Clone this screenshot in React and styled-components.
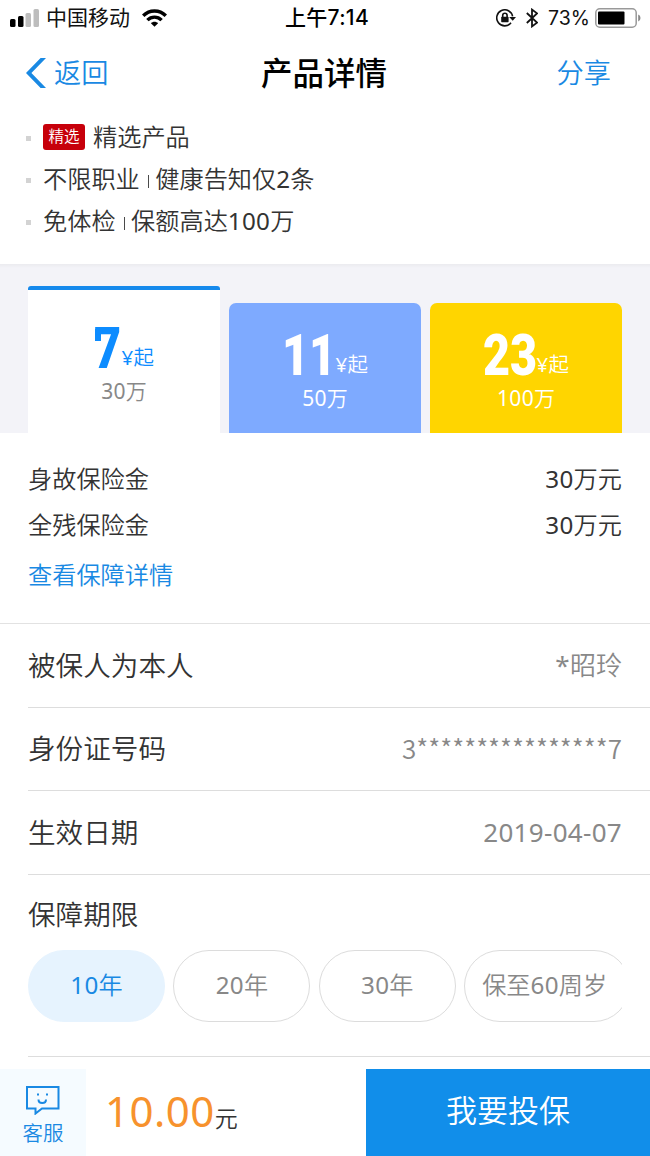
import { useState } from 'react';
import styled, { createGlobalStyle } from 'styled-components';

const CJK = '"Noto Sans CJK SC", sans-serif';
const BLUE = '#1989e3';

const GlobalStyle = createGlobalStyle`
    * {
        box-sizing: border-box;
    }

    body {
        margin: 0;
        background: #fff;
        color: #333;
        font-family: "Noto Sans", ${CJK};
        font-weight: 350;
    }

    button {
        border: 0;
        margin: 0;
        padding: 0;
        background: none;
        font: inherit;
        color: inherit;
    }
`;

const Page = styled.div`
    width: 650px;
    height: 1156px;
    display: flex;
    flex-direction: column;
    overflow: hidden;
    white-space: nowrap;
`;

const StatusBar = styled.div`
    height: 36px;
    flex: none;
    display: grid;
    grid-template-columns: 1fr auto 1fr;
    align-items: center;
    padding: 0 9px 0 10px;
    font: 400 21px/36px Inter, ${CJK};
    color: #111;
`;

const Carrier = styled.div`
    display: flex;
    align-items: center;

    svg + span {
        margin: 0 12px 0 7px;
    }
`;

const Time = styled.div`
    padding-left: 3px;
    font: 500 21px/36px Inter, ${CJK};
    letter-spacing: .3px;
    color: #000;
`;

const Indicators = styled.div`
    display: flex;
    align-items: center;
    justify-content: flex-end;
    font-size: 19.5px;

    svg:first-child {
        margin-right: 10px;
    }
`;

const Percent = styled.span`
    margin: 0 5px 0 10px;
`;

const NavBar = styled.div`
    height: 74px;
    flex: none;
    display: grid;
    grid-template-columns: 1fr auto 1fr;
    align-items: center;
    padding: 0 39px 0 26px;
`;

const NavButton = styled.button`
    display: flex;
    align-items: center;
    justify-self: ${({$right}) => $right ? 'end' : 'start'};
    gap: 8px;
    font-size: 27.2px;
    line-height: 74px;
    color: ${BLUE};
`;

const Title = styled.h1`
    margin: 0;
    padding: 0 0 3px 11px;
    font: 500 31.5px/71px ${CJK};
    color: #000;
`;

const Num = styled.span`
    font-weight: 400;
    letter-spacing: .3px;
`;

const Features = styled.ul`
    height: 154px;
    flex: none;
    margin: 0;
    padding: 6px 0 0 26px;
    list-style: none;
`;

const Feature = styled.li`
    height: 42px;
    display: flex;
    align-items: center;
    padding-bottom: 1px;
    font-size: 24.2px;
    line-height: 41px;

    &::before {
        content: '';
        width: 5px;
        height: 5px;
        margin: 3px 12px 0 0;
        background: #d3d3d3;
    }
`;

const Tag = styled.span`
    width: 42px;
    height: 26px;
    margin: 1px 8px 0 0;
    border-radius: 3px;
    background: #c7000b;
    color: #fff;
    font-size: 15.5px;
    line-height: 25px;
    text-align: center;
`;

const Divider = styled.i`
    width: 1.5px;
    height: 13px;
    margin: 5px 6px 0 8px;
    background: #4a4a4a;
`;

const Plans = styled.div`
    height: 169px;
    flex: none;
    display: flex;
    align-items: flex-end;
    gap: 9px;
    padding: 0 28px;
    background: linear-gradient(#ebebef, #f3f3f8 4px);
`;

const Plan = styled.button`
    width: 192px;
    height: ${({$active}) => $active ? 147 : 130}px;
    display: flex;
    flex-direction: column;
    align-items: center;
    padding-top: ${({$active}) => $active ? 35 : 29}px;
    border-top: ${({$active}) => $active ? '4px solid #1589ec' : '0'};
    border-radius: ${({$active}) => $active ? 3 : 7}px ${({$active}) => $active ? 3 : 7}px 0 0;
    background: ${({$active, $color}) => $active ? '#fff' : $color};
    color: ${({$active}) => $active ? '#0d8cff' : '#fff'};
`;

const PlanPrice = styled.span`
    display: flex;
    align-items: flex-end;
    height: 48px;
    font-size: 20.5px;
    line-height: 30px;
`;

const PlanNumber = styled.span`
    position: relative;
    width: ${({$digits}) => $digits * 26}px;
    margin-right: 1.5px;
    font: 700 57px/48px Roboto, sans-serif;

    b {
        display: inline-block;
        transform: scaleX(.82);
        transform-origin: 0 50%;
    }

    &::before {
        content: '';
        display: ${({$drop}) => $drop ? 'block' : 'none'};
        position: absolute;
        left: 1px;
        top: 4px;
        width: 6px;
        height: 12px;
        background: currentColor;
    }
`;

const PlanUnit = styled.span`
    margin-bottom: 1px;
`;

const PlanAmount = styled.span`
    margin-top: 3px;
    font-size: 21px;
    line-height: 30px;
    color: ${({$active}) => $active ? '#888' : 'inherit'};
`;

const Coverage = styled.section`
    height: 191px;
    flex: none;
    padding: 23px 28px 0;
    border-bottom: 1px solid #e2e2e2;
    font-size: 24.2px;
    line-height: 46px;
`;

const CoverageRow = styled.div`
    display: flex;
    justify-content: space-between;
`;

const DetailLink = styled.a`
    display: block;
    margin-top: 4px;
    color: ${BLUE};
`;

const Form = styled.section`
    flex: 1;
    margin-left: 28px;
`;

const Field = styled.div`
    height: ${({$height}) => $height}px;
    display: flex;
    align-items: center;
    justify-content: space-between;
    padding: 0 28px 2px 0;
    border-bottom: 1px solid #ddd;
    font-size: 27.6px;
    line-height: 40px;
`;

const Value = styled.span`
    font-size: 26px;
    color: #888;
`;

const MaskedValue = styled(Value)`
    font-family: ${CJK};
`;

const Period = styled.div`
    height: 182px;
    padding: 18px 28px 0 0;
    border-bottom: 1px solid #ddd;
    font-size: 27.6px;
    line-height: 42px;
`;

const Chips = styled.div`
    display: flex;
    gap: 8.4px;
    margin-top: 15px;
    overflow: hidden;
`;

const Chip = styled.button`
    flex: none;
    width: ${({$wide}) => $wide ? 166 : 137}px;
    height: 72px;
    padding: 0 ${({$wide}) => $wide ? 5 : 0}px 2px 0;
    border: 1px solid ${({$active}) => $active ? '#e6f3fe' : '#dcdcdc'};
    border-radius: 36px;
    background: ${({$active}) => $active ? '#e6f3fe' : '#fff'};
    color: ${({$active}) => $active ? BLUE : '#888'};
    font-size: 24.2px;
`;

const Footer = styled.footer`
    height: 87px;
    flex: none;
    display: flex;
`;

const Service = styled.button`
    width: 86px;
    display: flex;
    flex-direction: column;
    align-items: center;
    padding-top: 17px;
    background: #f5fbff;
    color: ${BLUE};
    font-size: 20.5px;
    line-height: 36px;
`;

const Total = styled.div`
    flex: 1;
    padding-left: 19px;
    font-size: 23px;
    line-height: 84px;

    b {
        font-size: 42px;
        font-weight: 400;
        letter-spacing: .5px;
        color: #f7922d;
    }
`;

const Submit = styled.button`
    width: 284px;
    padding-bottom: 5px;
    background: #118eea;
    color: #fff;
    font-size: 31px;
    line-height: 82px;
`;

const Signal = () => (
    <svg width="29" height="18" viewBox="0 0 29 18">
        <rect x="0" y="10" width="5.5" height="8" rx="1.5" />
        <rect x="8" y="7" width="5.5" height="11" rx="1.5" />
        <rect x="15.5" y="4" width="5.5" height="14" rx="1.5" fill="#bdbdbd" />
        <rect x="23.5" y="0" width="5.5" height="18" rx="1.5" fill="#bdbdbd" />
    </svg>
);

const Wifi = () => (
    <svg width="25" height="18" viewBox="0 0 25 18" fill="none" stroke="#000" strokeWidth="3.4">
        <path d="M1.2 6.8C7.5.4 17.5.4 23.8 6.8" />
        <path d="M5.4 11.1C9.4 7.1 15.6 7.1 19.6 11.1" />
        <path d="M8.9 14.3C10.9 12.3 14.1 12.3 16.1 14.3L12.5 17.8Z" fill="#000" stroke="none" />
    </svg>
);

const RotationLock = () => (
    <svg width="20" height="18" viewBox="0 0 20 18" fill="none" stroke="#111" strokeWidth="1.6">
        <path d="M16.6 7.4A8 8 0 1 0 15 13.8" />
        <path d="M13.2 8H20L16.7 11.8Z" fill="#111" stroke="none" />
        <rect x="5.2" y="7.8" width="7.4" height="5.4" rx=".7" fill="#111" stroke="none" />
        <path d="M6.7 8V6.5a2.2 2.2 0 0 1 4.4 0V8" />
    </svg>
);

const Bluetooth = () => (
    <svg width="12" height="20" viewBox="0 0 12 20" fill="none" stroke="#111" strokeWidth="1.8">
        <path d="M.8 5L11 14.6L6 18.4V1.6L11 5.4L.8 15" />
    </svg>
);

const Battery = () => (
    <svg width="46" height="20" viewBox="0 0 46 20">
        <rect x=".8" y=".8" width="40.4" height="18.4" rx="4" fill="none" stroke="#999" strokeWidth="1.5" />
        <rect x="3" y="3.5" width="26.5" height="13" rx="1" />
        <path d="M43.2 6.5Q45.5 7.2 45.5 10Q45.5 12.8 43.2 13.5Z" fill="#888" />
    </svg>
);

const BackArrow = () => (
    <svg width="20" height="30" viewBox="0 0 20 30" fill={BLUE}>
        <path d="M14.6 0H20L5.4 15L20 30H14.6L0 15Z" />
    </svg>
);

const ChatFace = () => (
    <svg width="34" height="29" viewBox="0 0 34 29" fill="none" stroke={BLUE} strokeWidth="2">
        <path d="M1 1H32.5V22.5H16L9.5 27.5V22.5H1Z" />
        <path d="M12.5 13.5Q12.5 17 16.2 17Q20 17 20 13.5" />
        <path d="M11 8.5h2M20 8.5h2" />
    </svg>
);

const plans = [
    { price: '7', amount: 30 },
    { price: '11', amount: 50, color: '#7eaaff' },
    { price: '23', amount: 100, color: '#ffd500' },
];

const periods = [
    { value: 10, unit: '年' },
    { value: 20, unit: '年' },
    { value: 30, unit: '年' },
    { prefix: '保至', value: 60, unit: '周岁' },
];

const benefits = ['身故保险金', '全残保险金'];

export default function App() {
    const [period, setPeriod] = useState(10);

    return (
        <Page>
            <GlobalStyle />
            <StatusBar>
                <Carrier><Signal /><span>中国移动</span><Wifi /></Carrier>
                <Time>上午7:14</Time>
                <Indicators>
                    <RotationLock />
                    <Bluetooth />
                    <Percent>73%</Percent>
                    <Battery />
                </Indicators>
            </StatusBar>
            <NavBar>
                <NavButton><BackArrow />返回</NavButton>
                <Title>产品详情</Title>
                <NavButton $right>分享</NavButton>
            </NavBar>
            <Features>
                <Feature><Tag>精选</Tag>精选产品</Feature>
                <Feature>不限职业<Divider />健康告知仅<Num>2</Num>条</Feature>
                <Feature>免体检<Divider />保额高达<Num>100</Num>万</Feature>
            </Features>
            <Plans>
                {plans.map(({ price, amount, color }, i) => (
                    <Plan key={price} $active={i === 0} $color={color}>
                        <PlanPrice>
                            <PlanNumber $digits={price.length} $drop={price === '7'}><b>{price}</b></PlanNumber>
                            <PlanUnit><Num>¥</Num>起</PlanUnit>
                        </PlanPrice>
                        <PlanAmount $active={i === 0}><Num>{amount}</Num>万</PlanAmount>
                    </Plan>
                ))}
            </Plans>
            <Coverage>
                {benefits.map((name) => (
                    <CoverageRow key={name}><span>{name}</span><span><Num>30</Num>万元</span></CoverageRow>
                ))}
                <DetailLink>查看保障详情</DetailLink>
            </Coverage>
            <Form>
                <Field $height={84}>被保人为本人<Value><Num>*</Num>昭玲</Value></Field>
                <Field $height={83}>身份证号码<MaskedValue>3****************7</MaskedValue></Field>
                <Field $height={84}>生效日期<Value><Num>2019-04-07</Num></Value></Field>
                <Period>
                    保障期限
                    <Chips>
                        {periods.map(({ prefix, value, unit }) => (
                            <Chip key={value} $active={value === period} $wide={!!prefix} onClick={() => setPeriod(value)}>
                                {prefix}<Num>{value}</Num>{unit}
                            </Chip>
                        ))}
                    </Chips>
                </Period>
            </Form>
            <Footer>
                <Service><ChatFace />客服</Service>
                <Total><b>10.00</b>元</Total>
                <Submit>我要投保</Submit>
            </Footer>
        </Page>
    );
}
